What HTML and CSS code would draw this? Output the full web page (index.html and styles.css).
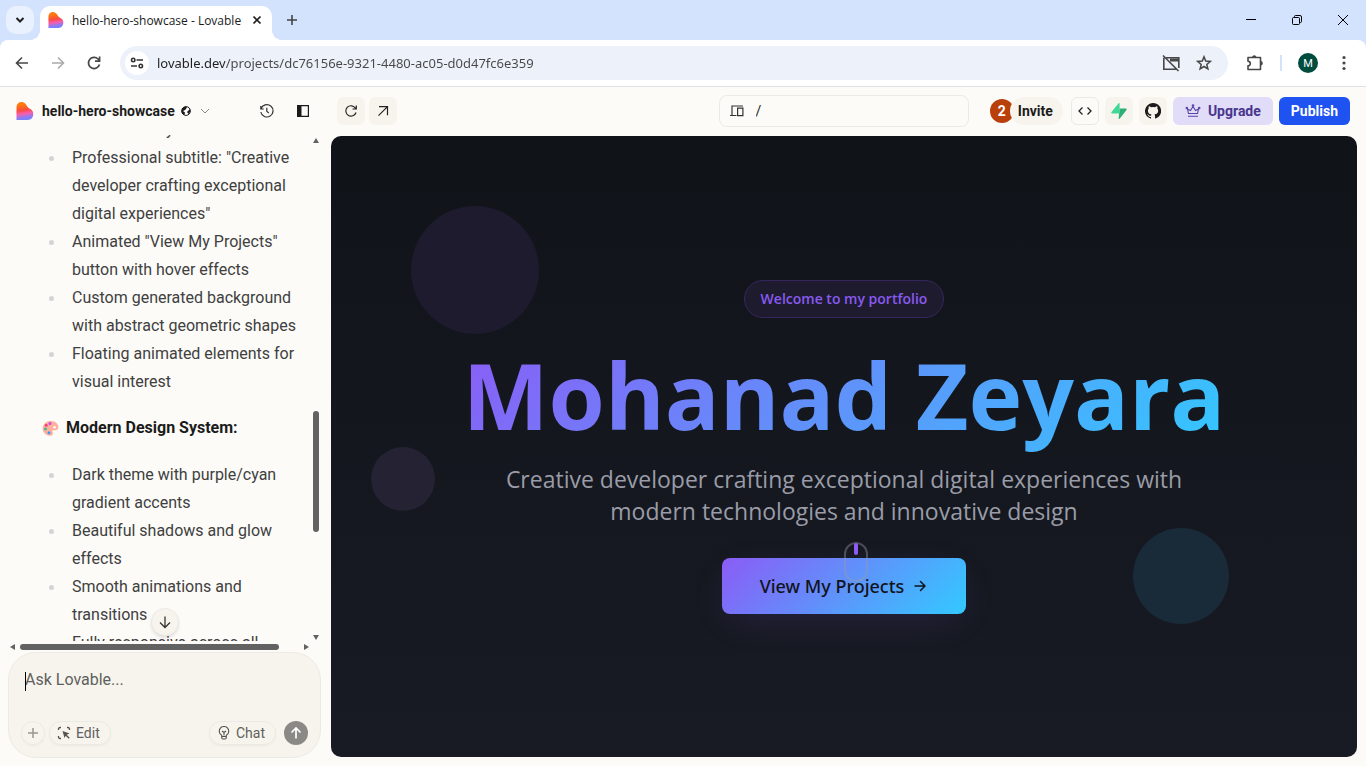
FILE: index.html
```html
<!DOCTYPE html>
<html lang="en">
<head>
<meta charset="utf-8">
<meta name="viewport" content="width=device-width, initial-scale=1">
<title>hello-hero-showcase - Lovable</title>
<link rel="stylesheet" href="styles.css">
</head>
<body>
<svg class="defs" width="0" height="0" aria-hidden="true">
  <defs>
    <linearGradient id="heart" x1="0.35" y1="0" x2="0.5" y2="1">
      <stop offset="0.15" stop-color="#ff7a0d"/><stop offset="0.45" stop-color="#fb4b3f"/><stop offset="0.65" stop-color="#f65fae"/><stop offset="0.9" stop-color="#7b80ff"/>
    </linearGradient>
    <symbol id="logo" viewBox="0 0 18 18"><path fill="url(#heart)" d="M.5 5A5 5 0 0 1 5.500 0C8 0 9.500 1.500 10.600 3.500 11.200 4.600 12 5.700 13.300 6.400A6 6 0 0 1 12 18H.5Z"/></symbol>
  </defs>
</svg>

<header class="tabstrip">
  <button class="tab-search" aria-label="Search tabs"><svg width="10" height="10" viewBox="0 0 10 10"><path d="M1.500 3 5 6.500 8.500 3" fill="none" stroke="#1f1f1f" stroke-width="2"/></svg></button>
  <div class="tab">
    <svg width="16" height="16"><use href="#logo"/></svg>
    <span class="tab-title">hello-hero-showcase - Lovable</span>
    <button class="plain" aria-label="Close tab"><svg width="16" height="16" viewBox="0 0 16 16"><path d="m4.500 4.500 7 7m0-7-7 7" stroke="#1f1f1f" stroke-width="1.700"/></svg></button>
  </div>
  <button class="plain new-tab" aria-label="New tab"><svg width="16" height="16" viewBox="0 0 16 16"><path d="M8 3v10M3 8h10" stroke="#444" stroke-width="1.600"/></svg></button>
  <div class="window-controls">
    <button class="plain" aria-label="Minimize"><svg width="12" height="12" viewBox="0 0 12 12"><path d="M1 5.500h10" stroke="#000"/></svg></button>
    <button class="plain" aria-label="Restore"><svg width="12" height="12" viewBox="0 0 12 12" fill="none" stroke="#000"><rect x="1.500" y="3.500" width="7" height="7" rx="1"/><path d="M3.500 3.500V2.500a1 1 0 0 1 1-1H9a1.500 1.500 0 0 1 1.500 1.500v4.500a1 1 0 0 1-1 1h-1"/></svg></button>
    <button class="plain" aria-label="Close"><svg width="12" height="12" viewBox="0 0 12 12"><path d="m1 1 10 10M11 1 1 11" stroke="#000"/></svg></button>
  </div>
</header>

<nav class="toolbar">
  <button class="plain" aria-label="Back"><svg width="16" height="16" viewBox="0 0 16 16" fill="none" stroke="#474747" stroke-width="1.600"><path d="M14 8H3M8 2.500 2.500 8 8 13.500"/></svg></button>
  <button class="plain" aria-label="Forward"><svg width="16" height="16" viewBox="0 0 16 16" fill="none" stroke="#ababab" stroke-width="1.600"><path d="M2 8h11M8 2.500 13.500 8 8 13.500"/></svg></button>
  <button class="plain" aria-label="Reload"><svg width="16" height="16" viewBox="0 0 16 16" fill="none" stroke="#474747" stroke-width="1.700"><path d="M13.500 9.500A5.600 5.600 0 1 1 12 4l1.500 1.600M13.600 1.500v4.700H9"/></svg></button>
  <div class="address">
    <button class="site-info" aria-label="Site information"><svg width="14" height="14" viewBox="0 0 14 14" fill="none" stroke="#333" stroke-width="1.600"><circle cx="3.200" cy="4" r="1.700"/><path d="M6.500 4H13M1 10h6"/><circle cx="10.800" cy="10" r="1.700"/></svg></button>
    <input class="url" aria-label="Address" value="lovable.dev/projects/dc76156e-9321-4480-ac05-d0d47fc6e359">
    <button class="plain" aria-label="Install unavailable"><svg width="18" height="18" viewBox="0 0 18 18" fill="none" stroke="#474747" stroke-width="1.600"><path d="M4 3.700h12.800V14M14 15.200H1.800V3.700M1 1.500 16.500 17"/><path d="M8 6h8.500" stroke-width="3"/></svg></button>
    <button class="plain" aria-label="Bookmark"><svg width="16" height="16" viewBox="0 0 16 16" fill="none" stroke="#474747" stroke-width="1.500"><path d="m8 1.800 1.700 4.300 4.600.3-3.500 3 1.100 4.500L8 11.500 4.100 13.900l1.100-4.500-3.500-3 4.600-.3Z"/></svg></button>
  </div>
  <button class="plain extensions" aria-label="Extensions"><svg width="18" height="18" viewBox="0 0 18 18"><path d="M2 3.500h12.500v12H2v-3.700a2.300 2.300 0 0 0 0-4.600Z" fill="none" stroke="#474747" stroke-width="1.600" stroke-linejoin="round"/><path d="M6 3a2.300 2.300 0 0 1 4.500 0ZM15 7a2.300 2.300 0 0 1 0 4.500Z" fill="#474747"/></svg></button>
  <span class="divider"></span>
  <button class="avatar" aria-label="Profile">M</button>
  <button class="plain" aria-label="Menu"><svg width="16" height="16" viewBox="0 0 16 16" fill="#474747"><circle cx="8" cy="2.500" r="1.600"/><circle cx="8" cy="8" r="1.600"/><circle cx="8" cy="13.500" r="1.600"/></svg></button>
</nav>

<div class="app">
  <aside class="sidebar">
    <div class="project-bar">
      <svg width="18" height="18"><use href="#logo"/></svg>
      <button class="plain project-name">hello-hero-showcase
        <svg width="10" height="10" viewBox="0 0 10 10"><circle cx="5" cy="5" r="4.400" fill="#fff" stroke="#1b1b1b"/><path d="M1 3 3 1h3L5 3 4 4 2 5l2 1.500L3.500 9 1 7ZM7 5l2-2v3L7.500 8 6 6Z" fill="#1b1b1b"/></svg>
        <svg width="10" height="10" viewBox="0 0 10 10"><path d="m1 3 4 4 4-4" fill="none" stroke="#888"/></svg>
      </button>
      <button class="plain history" aria-label="History"><svg width="16" height="16" viewBox="0 0 16 16" fill="none" stroke="#333" stroke-width="1.200"><path d="M2 5.800A6.200 6.200 0 1 1 1.800 9M1.800 3v3h3M7.800 4.800V8.200l2 2"/></svg></button>
      <button class="plain" aria-label="Toggle sidebar"><svg width="14" height="14" viewBox="0 0 14 14"><path d="M1.600 1.600h10.800v10.800H1.600Z" fill="none" stroke="#1b1b1b" stroke-width="1.200"/><path d="M1 1h4.500v12H1Z" fill="#1b1b1b"/></svg></button>
    </div>

    <div class="chat">
      <div class="messages">
        <ul class="points first">
          <li class="continued">"Mohanad Zeyara"</li>
          <li>Professional subtitle: "Creative<br>developer crafting exceptional<br>digital experiences"</li>
          <li>Animated "View My Projects"<br>button with hover effects</li>
          <li>Custom generated background<br>with abstract geometric shapes</li>
          <li>Floating animated elements for<br>visual interest</li>
        </ul>
        <h2 class="section-title">
          <svg width="17" height="17" viewBox="0 0 17 17"><path d="M8 1C13 .5 17 4 16.300 8c-.5 2.700-3 2.300-5 2.200-1.300 0-1 1.300-.6 2.300.6 1.800-.2 3.300-2.700 3.200C3.500 15.500.5 12 .7 8.300.9 4.300 4 1.300 8 1Z" fill="#ffb09c"/><circle cx="12.500" cy="7.300" r="1.300" fill="#fdfbf7"/><circle cx="8" cy="3.500" r="1.500" fill="#c94be8"/><circle cx="4.200" cy="5.300" r="1.500" fill="#f0447e"/><circle cx="3.500" cy="9" r="1.400" fill="#42b6a0"/><circle cx="7" cy="12.700" r="1.500" fill="#3f97f4"/></svg>
          Modern Design System:
        </h2>
        <ul class="points">
          <li>Dark theme with purple/cyan<br>gradient accents</li>
          <li>Beautiful shadows and glow<br>effects</li>
          <li>Smooth animations and<br>transitions</li>
          <li>Fully responsive across all</li>
        </ul>
      </div>
      <div class="v-scroll"><i class="arrow up"></i><i class="v-track"><i class="v-thumb"></i></i><i class="arrow down"></i></div>
      <div class="h-scroll"><i class="arrow left"></i><i class="h-track"><i class="h-thumb"></i></i><i class="arrow right"></i></div>
      <button class="jump" aria-label="Scroll to bottom"><svg width="14" height="14" viewBox="0 0 14 14" fill="none" stroke="#333" stroke-width="1.300"><path d="M7 1.500v11M2 7.500l5 5 5-5"/></svg></button>
    </div>

    <form class="composer">
      <div class="prompt"><textarea class="prompt-input" rows="1" aria-label="Message" placeholder="Ask Lovable..."></textarea><i class="caret"></i></div>
      <div class="composer-actions">
        <button type="button" class="round" aria-label="Add"><svg width="12" height="12" viewBox="0 0 12 12"><path d="M6 1v10M1 6h10" stroke="#999792" stroke-width="1.500"/></svg></button>
        <button type="button" class="pill"><svg width="14" height="14" viewBox="0 0 14 14" fill="none" stroke="#55534f" stroke-width="1.300"><path d="M1.500 4V3A1.500 1.500 0 0 1 3 1.500h1M10 1.500h1A1.500 1.500 0 0 1 12.500 3v1M1.500 10v1A1.500 1.500 0 0 0 3 12.500h1"/><path d="m5.500 5 7 2.500-2.800 1.200 3 3-1 1-3-3L7.500 12Z" fill="#55534f" stroke="none"/></svg>Edit</button>
        <button type="button" class="pill chat-mode"><svg width="14" height="14" viewBox="0 0 14 14" fill="none" stroke="#55534f" stroke-width="1.100"><path d="M4.700 9.300a4.700 4.700 0 1 1 4.600 0v2.400A1.500 1.500 0 0 1 7.800 13H6.200a1.500 1.500 0 0 1-1.500-1.300ZM4.700 10.500h4.600M5 5l2 1.500L9 5M7 6.500v3"/></svg>Chat</button>
        <button class="send" aria-label="Send"><svg width="14" height="14" viewBox="0 0 14 14" fill="none" stroke="#fff" stroke-width="1.700"><path d="M7 12.500V2M2.500 6.500 7 2l4.500 4.500"/></svg></button>
      </div>
    </form>
  </aside>

  <main class="workspace">
    <div class="preview-bar">
      <div class="preview-nav">
        <button class="square" aria-label="Refresh preview"><svg width="14" height="14" viewBox="0 0 14 14" fill="none" stroke="#222" stroke-width="1.200"><path d="M12 8.500A5.200 5.200 0 1 1 11.300 4l1 1M12.300 1.500V5H8.500"/></svg></button>
        <button class="square" aria-label="Open in new tab"><svg width="14" height="14" viewBox="0 0 14 14" fill="none" stroke="#222" stroke-width="1.200"><path d="M3 2.700h8.500v8.500M11.500 2.700 2.500 11.700"/></svg></button>
      </div>
      <div class="route"><svg width="14" height="14" viewBox="0 0 14 14" fill="none" stroke="#333" stroke-width="1.200"><path d="M2 11V2h11M0 11.500h6.500M7.600 4.100h5.300v7.500H7.600Z"/></svg><input class="route-input" aria-label="Route" value="/"></div>
      <div class="actions">
        <div class="invite-group"><span class="members">2</span><button class="invite">Invite</button></div>
        <button class="square outlined" aria-label="Code"><svg width="14" height="14" viewBox="0 0 14 14" fill="none" stroke="#222" stroke-width="1.300"><path d="M4.500 3.500 1 7l3.500 3.500M9.500 3.500 13 7l-3.500 3.500"/></svg></button>
        <button class="square" aria-label="Supabase"><svg width="16" height="16" viewBox="0 0 16 16"><path d="M8.600 5.500h6.200c1 0 1.200.8.700 1.500L8.800 15.600c-.5.500-1.200.3-1.200-.4Z" fill="#2fae76"/><path d="M8.600 5.500V.8c0-.8-.7-1-1.200-.4L.5 9c-.5.700-.3 1.500.7 1.500h6.600l.8-.5Z" fill="#3fd896"/></svg></button>
        <button class="square" aria-label="GitHub"><svg width="16" height="16" viewBox="0 0 16 16"><path fill="#1b1b1b" d="M8 0a8 8 0 0 0-2.530 15.590c.4.070.55-.17.550-.38v-1.330c-2.230.48-2.700-1.080-2.700-1.080-.36-.92-.89-1.170-.89-1.170-.73-.5.050-.49.050-.49.810.060 1.230.830 1.230.830.720 1.230 1.880.870 2.340.670.070-.52.280-.87.510-1.070-1.780-.2-3.640-.89-3.640-3.950 0-.87.310-1.590.820-2.150-.08-.2-.36-1.020.080-2.120 0 0 .67-.21 2.200.820a7.600 7.600 0 0 1 4 0c1.530-1.040 2.200-.82 2.200-.82.440 1.100.160 1.920.080 2.120.510.560.820 1.270.820 2.150 0 3.070-1.870 3.750-3.650 3.950.29.250.540.730.540 1.480v2.190c0 .21.150.46.550.38A8 8 0 0 0 8 0"/></svg></button>
        <button class="upgrade"><svg width="16" height="16" viewBox="0 0 16 16" fill="none" stroke="#5843a3" stroke-width="1.100"><path d="m2.500 6 1 4.500h9l1-4.500-3 1.500L8 3.500 5.500 7.500ZM3 13.300h10"/><circle cx="8" cy="2.500" r=".8"/><circle cx="1.800" cy="5" r=".7"/><circle cx="14.200" cy="5" r=".7"/></svg>Upgrade</button>
        <button class="publish">Publish</button>
      </div>
    </div>

    <section class="hero">
      <i class="orb orb-large"></i><i class="orb orb-small"></i><i class="orb orb-cyan"></i>
      <p class="badge">Welcome to my portfolio</p>
      <h1 class="hero-title">Mohanad Zeyara</h1>
      <p class="subtitle">Creative developer crafting exceptional digital experiences with<br>modern technologies and innovative design</p>
      <button class="cta">View My Projects<svg width="16" height="16" viewBox="0 0 16 16" fill="none" stroke="#11141b" stroke-width="1.500" stroke-linecap="round" stroke-linejoin="round"><path d="M3 8h10M8.500 3.500 13 8l-4.500 4.500"/></svg></button>
      <i class="mouse"><i class="wheel"></i></i>
    </section>
  </main>
</div>
</body>
</html>
```
FILE: styles.css
```css
* { box-sizing: border-box; }
body { margin: 0; height: 100vh; display: flex; flex-direction: column; overflow: hidden; background: #d3e2fd; color: #1b1b1b; font: 16px Roboto, "Liberation Sans", sans-serif; }
button, input, textarea { font: inherit; color: inherit; border: 0; padding: 0; margin: 0; background: none; }
button { display: flex; align-items: center; justify-content: center; flex: none; }
svg { display: block; flex: none; }
p, h1, h2, ul { margin: 0; padding: 0; }
.defs { position: absolute; }

.tabstrip { height: 40px; flex: none; display: flex; align-items: center; padding-left: 6px; font: 12px "Open Sans", sans-serif; }
.tab-search { width: 28px; height: 28px; border-radius: 10px; background: #e9f0fe; }
.tab { position: relative; width: 232px; height: 34px; margin-left: 6px; align-self: flex-end; display: flex; align-items: center; gap: 8px; padding: 0 8px 6px; border-radius: 10px 10px 0 0; background: #fff; }
.tab::before, .tab::after { content: ""; position: absolute; bottom: 0; width: 10px; height: 10px; }
.tab::before { right: 100%; background: radial-gradient(circle at 0 0, transparent 10px, #fff 10px); }
.tab::after { left: 100%; background: radial-gradient(circle at 100% 0, transparent 10px, #fff 10px); }
.tab-title { flex: 1; white-space: nowrap; }
.new-tab { margin-left: 12px; }
.window-controls { margin-left: auto; display: flex; gap: 34px; padding-right: 17px; }

.toolbar { height: 47px; flex: none; display: flex; align-items: center; gap: 20px; padding: 0 14px; background: #fff; border-bottom: 1px solid #dde1e6; border-radius: 8px 8px 0 0; }
.address { flex: 1; height: 34px; margin-right: -2px; margin-left: -2px; display: flex; align-items: center; gap: 16px; padding: 0 16px 0 5px; border-radius: 17px; background: #ecf1fa; }
.site-info { width: 24px; height: 24px; border-radius: 12px; background: #fff; }
.url { flex: 1; min-width: 0; height: 24px; margin-left: -8px; outline: 0; font: 13px "Noto Sans", sans-serif; color: transparent; background: linear-gradient(90deg, #1f1f1f 68px, #474747 68px); background-clip: text; -webkit-background-clip: text; }
.divider { width: 2px; height: 16px; margin-left: -4px; background: #d3e3fd; }
.avatar { width: 20px; height: 20px; margin: 0 -2px 0 -4px; border-radius: 50%; background: #004d40; color: #fff; font-size: 11px; }

.app { flex: 1; min-height: 0; display: flex; background: #fcfbf8; }
.sidebar { width: 331px; flex: none; display: flex; flex-direction: column; padding-bottom: 9px; }
.project-bar { height: 48px; flex: none; display: flex; align-items: center; padding: 0 21px 0 16px; gap: 8px; }
.project-name { gap: 6px; font-size: 14px; font-weight: 700; }
.project-name svg + svg { margin-left: 3px; }
.history { margin: 0 13px 0 auto; }
.chat { position: relative; flex: 1; min-height: 0; margin-right: 9px; display: grid; grid-template: minmax(0, 1fr) 11px / minmax(0, 1fr) 12px; }
.messages { overflow: hidden; padding: 0 0 0 42px; line-height: 28px; color: #40403f; }
.points { list-style: none; padding-left: 30px; white-space: nowrap; }
.points.first { margin-top: -19px; }
.points li { position: relative; }
.points li::before { content: ""; position: absolute; left: -23px; top: 12px; width: 5px; height: 5px; border-radius: 50%; background: #d4d4d6; }
.section-title { display: flex; align-items: center; gap: 7px; margin: 18px 0 19px; font-size: 16px; font-weight: 700; color: #1b1b1b; }
.v-scroll { display: flex; flex-direction: column; align-items: center; padding: 3px 0 1px; }
.v-track { flex: 1; width: 6px; padding-top: 268px; }
.v-thumb { display: block; height: 121px; border-radius: 3px; background: #626262; }
.h-scroll { grid-column: 1 / 3; display: flex; align-items: center; padding: 0 13px 0 10px; }
.h-track { flex: 1; padding: 0 25px 0 5px; }
.h-thumb { display: block; height: 6px; border-radius: 3px; background: #626262; }
.arrow { border: 3px solid transparent; }
.up { border-bottom: 5px solid #626262; border-top: 0; }
.down { border-top: 5px solid #626262; border-bottom: 0; }
.left { border-right: 5px solid #626262; border-left: 0; }
.right { border-left: 5px solid #626262; border-right: 0; }
.jump { position: absolute; left: 151px; bottom: 16px; width: 28px; height: 28px; border-radius: 50%; border: 1px solid #eceae4; background: #f7f4ed; box-shadow: 0 2px 3px #0000001a; }

.composer { height: 106px; flex: none; margin: 0 10px -1px 8px; padding: 16px 12px 12px; display: flex; flex-direction: column; justify-content: space-between; border: 1px solid #eceae4; border-radius: 28px; background: #f7f4ed; color: #5f5f5d; }
.prompt { position: relative; display: flex; padding-left: 4px; }
.prompt-input { flex: 1; height: 22px; line-height: 22px; resize: none; outline: 0; overflow: hidden; }
.prompt-input::placeholder { color: #5f5f5d; opacity: 1; }
.caret { position: absolute; left: 4px; top: 3px; width: 1px; height: 19px; background: #000; }
.composer-actions { display: flex; align-items: center; gap: 4px; font-size: 14px; }
.round, .pill { height: 24px; border: 1px solid #eceae4; border-radius: 12px; box-shadow: 0 1px 2px #0000000d; }
.round { width: 24px; }
.pill { padding: 0 10px 0 7px; gap: 5px; }
.chat-mode { margin-left: auto; margin-right: 4px; }
.send { width: 24px; height: 24px; border-radius: 50%; background: #8a8985; }

.workspace { flex: 1; min-width: 0; display: flex; flex-direction: column; padding: 0 9px 9px 0; }
.preview-bar { height: 49px; flex: none; display: grid; grid-template-columns: 1fr 250px 1fr; align-items: center; padding: 0 7px 1px 6px; }
.preview-nav, .actions, .invite-group { display: flex; align-items: center; }
.preview-nav { gap: 4px; }
.square { width: 28px; height: 28px; border-radius: 6px; background: #f7f4ed; }
.outlined { border: 1px solid #eceae4; background: #fcfbf8; }
.route { height: 32px; display: flex; align-items: center; gap: 12px; padding: 0 10px; border: 1px solid #eceae4; border-radius: 8px; font-size: 14px; }
.route-input { flex: 1; min-width: 0; outline: 0; }
.actions { gap: 6px; justify-content: flex-end; font-size: 14px; font-weight: 700; }
.members { width: 24px; height: 24px; border-radius: 50%; background: #b9400b; color: #fff; line-height: 24px; text-align: center; }
.invite { height: 28px; margin-left: -4px; padding: 0 10px 0 8px; border-radius: 14px; background: #f7f4ed; }
.invite-group { margin-right: 2px; }
.upgrade { height: 28px; padding: 0 12px; gap: 7px; border-radius: 6px; background: #e1dcf7; color: #48358d; }
.publish { height: 28px; padding: 0 12px; border-radius: 6px; background: #1e52f1; color: #fff; }

.hero { position: relative; flex: 1; display: flex; flex-direction: column; align-items: center; justify-content: center; border-radius: 10px; overflow: hidden; text-align: center; background: linear-gradient(180deg, #101318, #181b24); font-family: "Open Sans", "Noto Sans", sans-serif; }
.orb { position: absolute; border-radius: 50%; }
.orb-large { left: 80px; top: 70px; width: 128px; height: 128px; background: #1e1b2e; }
.orb-small { left: 40px; top: 50%; width: 64px; height: 64px; background: #242233; }
.orb-cyan { right: 128px; bottom: 133px; width: 96px; height: 96px; background: #192b39; }
.badge { height: 38px; padding: 0 16px; line-height: 36px; border: 1px solid #35275d; border-radius: 19px; background: #1f1b2e; color: #875af0; font-size: 14px; font-weight: 600; }
.hero-title { margin: 14px 0 5px; font-size: 91px; line-height: 126px; font-weight: 700; white-space: nowrap; color: transparent; background: linear-gradient(135deg, #8b5cf6, #33c9ff); background-clip: text; -webkit-background-clip: text; }
.subtitle { font-size: 23px; line-height: 32px; color: #9a9ca8; }
.cta { height: 56px; margin-top: 31px; padding: 0 38px; gap: 8px; border-radius: 8px; background: linear-gradient(135deg, #8b5cf6, #33c9ff); color: #11141b; font: 500 18px "Noto Sans", sans-serif; box-shadow: 0 10px 40px -10px #8b5cf633; }
.mouse { position: absolute; left: 50%; top: 406px; width: 24px; height: 40px; border: 2px solid #9a9ca866; border-radius: 12px; }
.wheel { display: block; width: 4px; height: 12px; margin: -1px auto 0; border-radius: 2px; background: #8b5cf6; }
```
